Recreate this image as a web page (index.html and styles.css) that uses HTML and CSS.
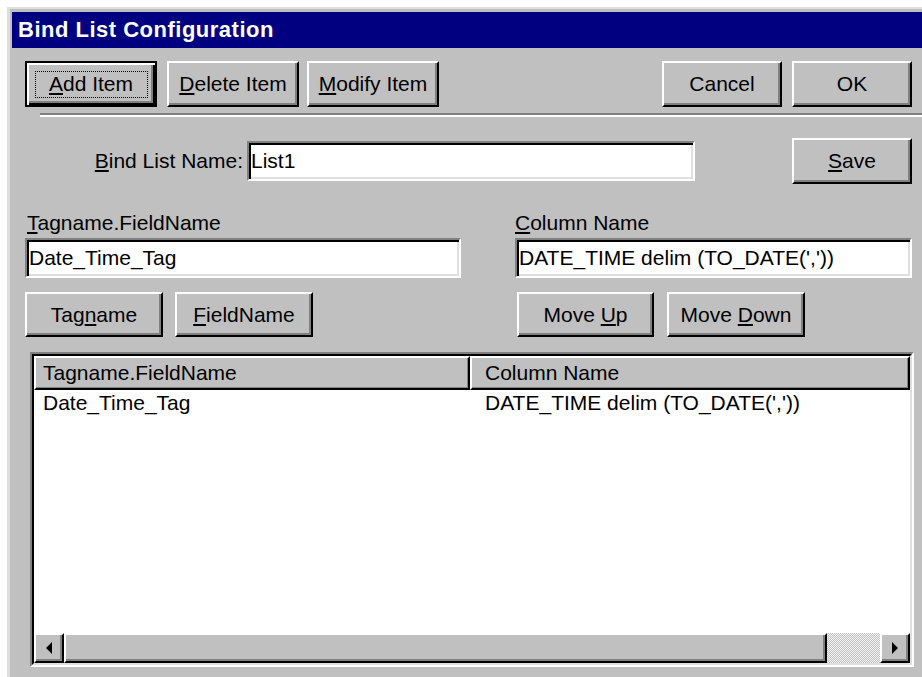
FILE: index.html
```html
<!DOCTYPE html>
<html lang="en">
<head>
<meta charset="utf-8">
<title>Bind List Configuration</title>
<link rel="stylesheet" href="styles.css">
</head>
<body>
<div class="window">
  <div class="titlebar">Bind List Configuration</div>
  <div class="client">
    <div class="toolbar">
      <div class="btn btn-default w132"><span class="focus"><span><u>A</u>dd Item</span></span></div>
      <div class="btn w132 ml10"><span><u>D</u>elete Item</span></div>
      <div class="btn w132 ml8"><span><u>M</u>odify Item</span></div>
      <div class="btn w120 push"><span>Cancel</span></div>
      <div class="btn w120 ml10"><span>OK</span></div>
    </div>
    <div class="separator"></div>

    <div class="name-row">
      <div class="name-label"><u>B</u>ind List Name:</div>
      <div class="textbox name-box"><span>List1</span></div>
      <div class="btn w120 push"><span><u>S</u>ave</span></div>
    </div>

    <div class="fields">
      <div class="field">
        <div class="field-label pl2"><u>T</u>agname.FieldName</div>
        <div class="textbox"><span>Date_Time_Tag</span></div>
        <div class="btn-row">
          <div class="btn btn-sm w138"><span>Tag<u>n</u>ame</span></div>
          <div class="btn btn-sm w138"><span><u>F</u>ieldName</span></div>
        </div>
      </div>
      <div class="field">
        <div class="field-label"><u>C</u>olumn Name</div>
        <div class="textbox"><span>DATE_TIME delim (TO_DATE(','))</span></div>
        <div class="btn-row gap13 pl2">
          <div class="btn btn-sm w137"><span>Move <u>U</u>p</span></div>
          <div class="btn btn-sm w138"><span>Move <u>D</u>own</span></div>
        </div>
      </div>
    </div>

    <div class="listview">
      <div class="list-inner">
        <div class="list-header">
          <div class="hcell hcell-first">Tagname.FieldName</div>
          <div class="hcell hcell-rest">Column Name</div>
        </div>
        <div class="list-body">
          <div class="list-row">
            <div class="cell cell-first">Date_Time_Tag</div>
            <div class="cell cell-rest">DATE_TIME delim (TO_DATE(','))</div>
          </div>
        </div>
        <div class="hscroll">
          <div class="sbtn">
            <svg width="8" height="12" viewBox="0 0 8 12"><polygon points="7,0 1,6 7,12" fill="#000"/></svg>
          </div>
          <div class="thumb"></div>
          <div class="track"></div>
          <div class="sbtn">
            <svg width="8" height="12" viewBox="0 0 8 12"><polygon points="1,0 7,6 1,12" fill="#000"/></svg>
          </div>
        </div>
      </div>
    </div>
  </div>
</div>
</body>
</html>
```

FILE: styles.css
```css
* {
  box-sizing: border-box;
}

html,
body {
  margin: 0;
  height: 100%;
}

body {
  background: #fff;
  font-family: "Liberation Sans", Arial, sans-serif;
  font-size: 21px;
  line-height: 24px;
  color: #000;
  overflow: hidden;
}

u {
  text-decoration-thickness: 1.5px;
  text-underline-offset: 2px;
}

/* dialog frame */
.window {
  margin: 7px 0 0 7px;
  height: calc(100% - 7px);
  background: #c0c0c0;
  border-top: 2px solid #dedede;
  border-left: 3px solid #dedede;
  padding: 3px 0 0 2px;
  overflow: hidden;
}

.titlebar {
  height: 36px;
  background: #000080;
  color: #fff;
  font-weight: bold;
  font-size: 22px;
  letter-spacing: 0.5px;
  padding-left: 6px;
  display: flex;
  align-items: center;
}

.client {
  padding: 0 10px 0 13px;
}

/* raised push buttons */
.btn {
  height: 46px;
  display: flex;
  align-items: center;
  justify-content: center;
  background: #c0c0c0;
  border: 2px solid;
  border-color: #fff #000 #000 #fff;
  box-shadow: inset -2px -2px 0 #808080;
  white-space: nowrap;
  flex: none;
}

.btn-sm {
  height: 45px;
}

.btn-default {
  border-color: #000;
  box-shadow: inset 2px 2px 0 #fff, inset -2px -2px 0 #000, inset -4px -4px 0 #808080;
}

.focus {
  width: 113px;
  height: 27px;
  border: 1px dotted #000;
  display: flex;
  align-items: center;
  justify-content: center;
}

.w120 { width: 120px; }
.w132 { width: 132px; }
.w137 { width: 137px; }
.w138 { width: 138px; }
.ml8 { margin-left: 8px; }
.ml10 { margin-left: 10px; }
.pl2 { padding-left: 2px; }
.push { margin-left: auto; }

.toolbar {
  display: flex;
  margin-top: 13px;
}

.separator {
  margin: 6px -10px 0 15px;
  height: 4px;
  border-top: 2px solid #808080;
  border-bottom: 2px solid #fff;
}

/* sunken edit fields */
.textbox {
  height: 40px;
  background: #fff;
  border: 2px solid;
  border-color: #808080 #fff #fff #808080;
  box-shadow: inset 2px 2px 0 #000, inset -2px -2px 0 #dfdfdf;
  padding-left: 2px;
  display: flex;
  align-items: center;
  white-space: nowrap;
  overflow: hidden;
}

.name-row {
  display: flex;
  align-items: center;
  margin-top: 21px;
  height: 46px;
}

.name-label {
  width: 218px;
  margin-right: 4px;
  text-align: right;
}

.name-box {
  width: 448px;
}

.fields {
  margin-top: 27px;
  display: grid;
  grid-template-columns: 436px 1fr;
  column-gap: 54px;
}

.field-label {
  height: 24px;
}

.field .textbox {
  margin-top: 3px;
}

.btn-row {
  display: flex;
  gap: 12px;
  margin-top: 14px;
}

.gap13 {
  gap: 13px;
}

/* report list view */
.listview {
  margin: 15px -2px 0 5px;
  height: 315px;
  border: 2px solid;
  border-color: #808080 #fff #fff #808080;
}

.list-inner {
  height: 100%;
  border: 2px solid;
  border-color: #000 #dfdfdf #dfdfdf #000;
  background: #fff;
  display: flex;
  flex-direction: column;
}

.list-header {
  display: flex;
  height: 34px;
  flex: none;
}

.hcell {
  background: #c0c0c0;
  border: 2px solid;
  border-color: #fff #000 #000 #fff;
  box-shadow: inset -1px -1px 0 #808080;
  padding-top: 3px;
  white-space: nowrap;
}

.hcell-first {
  width: 436px;
  padding-left: 7px;
}

.hcell-rest {
  flex: 1;
  padding-left: 13px;
}

.list-body {
  flex: 1;
}

.list-row {
  display: flex;
  padding-top: 1px;
  height: 25px;
}

.cell {
  white-space: nowrap;
}

.cell-first {
  width: 436px;
  padding-left: 9px;
}

.cell-rest {
  padding-left: 15px;
}

.hscroll {
  display: flex;
  height: 30px;
  flex: none;
}

.sbtn,
.thumb {
  background: #c0c0c0;
  border: 2px solid;
  border-color: #fff #000 #000 #fff;
  box-shadow: inset -2px -2px 0 #808080;
}

.sbtn {
  width: 30px;
  display: flex;
  align-items: center;
  justify-content: center;
}

.sbtn svg {
  display: block;
}

.thumb {
  width: 763px;
}

.track {
  flex: 1;
  background: repeating-conic-gradient(#c0c0c0 0 25%, #f4f4f4 0 50%) 0 0 / 2px 2px;
}
```
